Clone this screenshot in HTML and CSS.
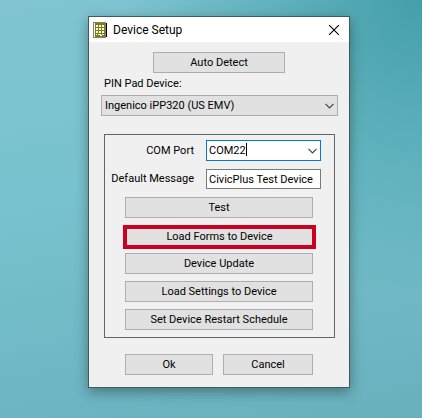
FILE: index.html
```
<!DOCTYPE html>
<html lang="en">
<head>
<meta charset="UTF-8">
<meta name="viewport" content="width=device-width, initial-scale=1.0">
<title>Device Setup</title>
<link rel="stylesheet" href="styles.css">
</head>
<body>
<form class="dialog">
    <header class="titlebar">
        <svg class="app-icon" width="14" height="16" viewBox="0 0 14 16" shape-rendering="crispEdges">
            <rect x="12" y="1" width="2" height="14" fill="#000"/>
            <rect x="0" y="0" width="13" height="16" fill="#808080"/>
            <rect x="1" y="1" width="11" height="14" fill="#fff"/>
            <rect x="2" y="1" width="10" height="14" fill="#808000"/>
            <path d="M3 3h2v2h-2zM6 3h2v2h-2zM9 3h2v2h-2zM3 6h2v2h-2zM6 6h2v2h-2zM9 6h2v2h-2zM3 9h2v2h-2zM6 9h2v2h-2zM9 9h2v2h-2zM3 12h1v1h-1zM5 12h3v1h-3zM7 13h2v1h-2zM9 12h2v1h-2z" fill="#fff"/>
        </svg>
        <h1>Device Setup</h1>
        <button type="button" class="close" aria-label="Close">
            <svg width="10" height="10" viewBox="0 0 10 10"><path d="M0 0L10 10M10 0L0 10" stroke="#000" stroke-width="1.1"/></svg>
        </button>
    </header>
    <main class="content">
        <button type="button" class="btn detect">Auto Detect</button>
        <label class="device-label" for="device">PIN Pad Device:</label>
        <div class="combo">
            <select id="device">
                <option>Ingenico iPP320 (US EMV)</option>
            </select>
            <svg class="chevron" width="9" height="6" viewBox="0 0 9 6"><path d="M0.5 0.8L4.5 4.8L8.5 0.8" fill="none" stroke="#444" stroke-width="1.2"/></svg>
        </div>
        <section class="panel">
            <div class="field">
                <label for="port">COM Port</label>
                <div class="combo">
                    <input type="text" id="port" class="port" value="COM22" role="combobox" aria-expanded="false">
                    <span class="cursor"></span>
                    <svg class="chevron" width="9" height="6" viewBox="0 0 9 6"><path d="M0.5 0.8L4.5 4.8L8.5 0.8" fill="none" stroke="#444" stroke-width="1.2"/></svg>
                </div>
            </div>
            <div class="field">
                <label for="message">Default Message</label>
                <input type="text" id="message" class="message" value="CivicPlus Test Device">
            </div>
            <div class="actions">
                <button type="button" class="btn">Test</button>
                <button type="button" class="btn highlight">Load Forms to Device</button>
                <button type="button" class="btn">Device Update</button>
                <button type="button" class="btn">Load Settings to Device</button>
                <button type="button" class="btn">Set Device Restart Schedule</button>
            </div>
        </section>
        <footer class="buttons">
            <button type="submit" class="btn">Ok</button>
            <button type="button" class="btn">Cancel</button>
        </footer>
    </main>
</form>
</body>
</html>
```
FILE: styles.css
```
* {
    box-sizing: border-box;
}
body {
    margin: 0;
    padding: 16px 72px 30px 88px;
    min-height: 100vh;
    font-family: Roboto, "Liberation Sans", sans-serif;
    font-size: 11px;
    line-height: 14px;
    color: #000;
    background:
        radial-gradient(circle at 100% 0%, #449fa9 0%, rgba(68, 159, 169, 0) 50%),
        linear-gradient(170deg, #7fc4d0 0%, #78c3cf 40%, #69b0bd 100%);
}
.dialog {
    background: #f0f0f0;
    border: 1px solid #41585c;
    box-shadow: 0 4px 12px rgba(0, 0, 0, 0.35);
}
.titlebar {
    display: flex;
    align-items: center;
    height: 25px;
    padding: 0 10px 0 4px;
    background: #fff;
}
h1 {
    flex: 1;
    margin: 0 0 0 6px;
    font-size: 12px;
    font-weight: 400;
}
.close {
    display: flex;
    padding: 0;
    border: none;
    background: none;
}
.content {
    display: flex;
    flex-direction: column;
    padding: 10px 11px 12px 12px;
}
.btn {
    height: 21px;
    padding: 0;
    border: 1px solid #adadad;
    background: #e1e1e1;
    font: inherit;
    color: inherit;
}
.detect {
    width: 132px;
    margin-left: 52px;
}
.device-label {
    margin: 4px 3px;
}
.combo {
    position: relative;
    display: flex;
}
.chevron {
    position: absolute;
    right: 4px;
    top: 8px;
    pointer-events: none;
}
/* text cursor after the port name */
.cursor {
    position: absolute;
    left: 40px;
    top: 3px;
    width: 1px;
    height: 13px;
    background: #000;
}
select, input {
    width: 100%;
    height: 21px;
    padding: 0 2px;
    border: 1px solid #7a7a7a;
    border-radius: 0;
    background: #fff;
    font: inherit;
    color: inherit;
    outline: none;
}
select {
    appearance: none;
    padding: 0 3px;
    border-color: #adadad;
    background: #e1e1e1;
}
.port {
    border-color: #0078d7;
}
.message {
    height: 20px;
}
.panel {
    display: flex;
    flex-direction: column;
    gap: 8px;
    margin: 18px 3px 0;
    padding: 5px 13px 7px 4px;
    border: 1px solid #646464;
}
.field {
    display: grid;
    grid-template-columns: 1fr 115px;
    gap: 12px;
    align-items: center;
    text-align: right;
    white-space: nowrap;
}
.actions {
    display: grid;
    gap: 7px;
    padding: 0 8px 0 16px;
}
.highlight {
    height: 24px;
    margin: 0 -3px -3px -2px;
    border: 4px solid #cc0022;
    line-height: 12px;
}
.buttons {
    display: grid;
    grid-template-columns: 88fr 90fr;
    gap: 10px;
    margin: 16px 25px 0 24px;
}
```
